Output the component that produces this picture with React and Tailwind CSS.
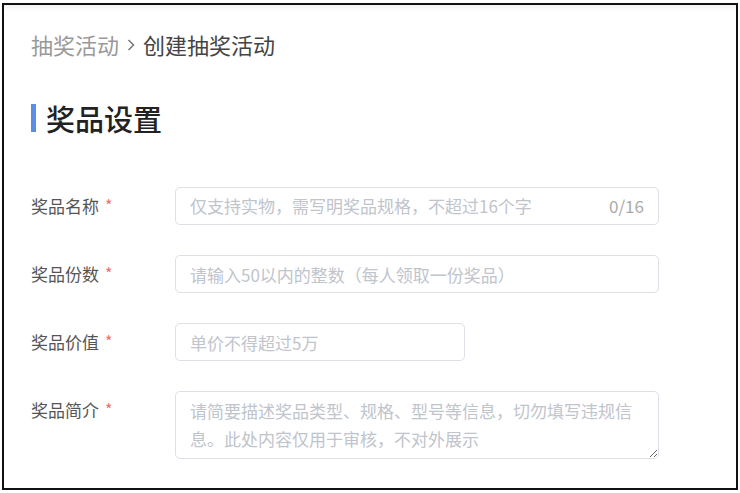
import React from "react";

const font = { fontFamily: '"Noto Sans CJK SC", "Noto Sans", sans-serif' };

function Label({ children }) {
  return (
    <div className="w-[144px] shrink-0 flex items-center h-[38px] text-[17px] text-[#555]">
      <span>{children}</span>
      <span className="ml-[6px] text-[#f56c6c] text-[16px] relative -top-[1px]">*</span>
    </div>
  );
}

export default function App() {
  return (
    <div className="w-[740px] h-[493px] bg-white" style={font}>
      <div className="ml-[2px] mt-[3px] w-[736px] h-[487px] border-2 border-[#111] bg-gradient-to-b from-[#f4f4f4] via-white to-white bg-[length:100%_14px] bg-no-repeat">
        <div className="pl-[27px] pt-[24px] flex flex-col">
          <div className="flex items-center h-[30px] text-[22px] leading-[30px]">
            <span className="text-[#999]">抽奖活动</span>
            <svg width="10" height="16" viewBox="0 0 10 16" className="mx-[7px] mt-[2px]">
              <path d="M2.5 3 L7.5 8 L2.5 13" fill="none" stroke="#777" strokeWidth="1.5" />
            </svg>
            <span className="text-[#444]">创建抽奖活动</span>
          </div>

          <div className="mt-[41px] flex items-center h-[36px]">
            <div className="w-[5px] h-[28px] bg-[#5b8fe6]" />
            <span className="ml-[10px] text-[29px] leading-[36px] text-[#222] font-medium">奖品设置</span>
          </div>

          <div className="mt-[51px] flex flex-col gap-[30px]">
            <div className="flex">
              <Label>奖品名称</Label>
              <div className="w-[484px] h-[38px] border border-[#dcdfe6] rounded-[5px] flex items-center pl-[14px] pr-[14px] bg-white">
                <input
                  className="flex-1 outline-none text-[17px] text-[#333] placeholder:text-[#c0c4cc] bg-transparent"
                  placeholder="仅支持实物，需写明奖品规格，不超过16个字"
                />
                <span className="text-[17px] text-[#aaa]">0/16</span>
              </div>
            </div>

            <div className="flex">
              <Label>奖品份数</Label>
              <input
                className="w-[484px] h-[38px] border border-[#dcdfe6] rounded-[5px] px-[14px] outline-none text-[17px] text-[#333] placeholder:text-[#c0c4cc]"
                placeholder="请输入50以内的整数（每人领取一份奖品）"
              />
            </div>

            <div className="flex">
              <Label>奖品价值</Label>
              <input
                className="w-[290px] h-[38px] border border-[#dcdfe6] rounded-[5px] px-[14px] outline-none text-[17px] text-[#333] placeholder:text-[#c0c4cc]"
                placeholder="单价不得超过5万"
              />
            </div>

            <div className="flex">
              <Label>奖品简介</Label>
              <textarea
                className="w-[484px] h-[68px] border border-[#dcdfe6] rounded-[5px] px-[14px] py-[5px] outline-none text-[17px] leading-[28px] text-[#333] placeholder:text-[#c0c4cc] resize-y overflow-hidden"
                placeholder="请简要描述奖品类型、规格、型号等信息，切勿填写违规信息。此处内容仅用于审核，不对外展示"
              />
            </div>
          </div>
        </div>
      </div>
    </div>
  );
}
